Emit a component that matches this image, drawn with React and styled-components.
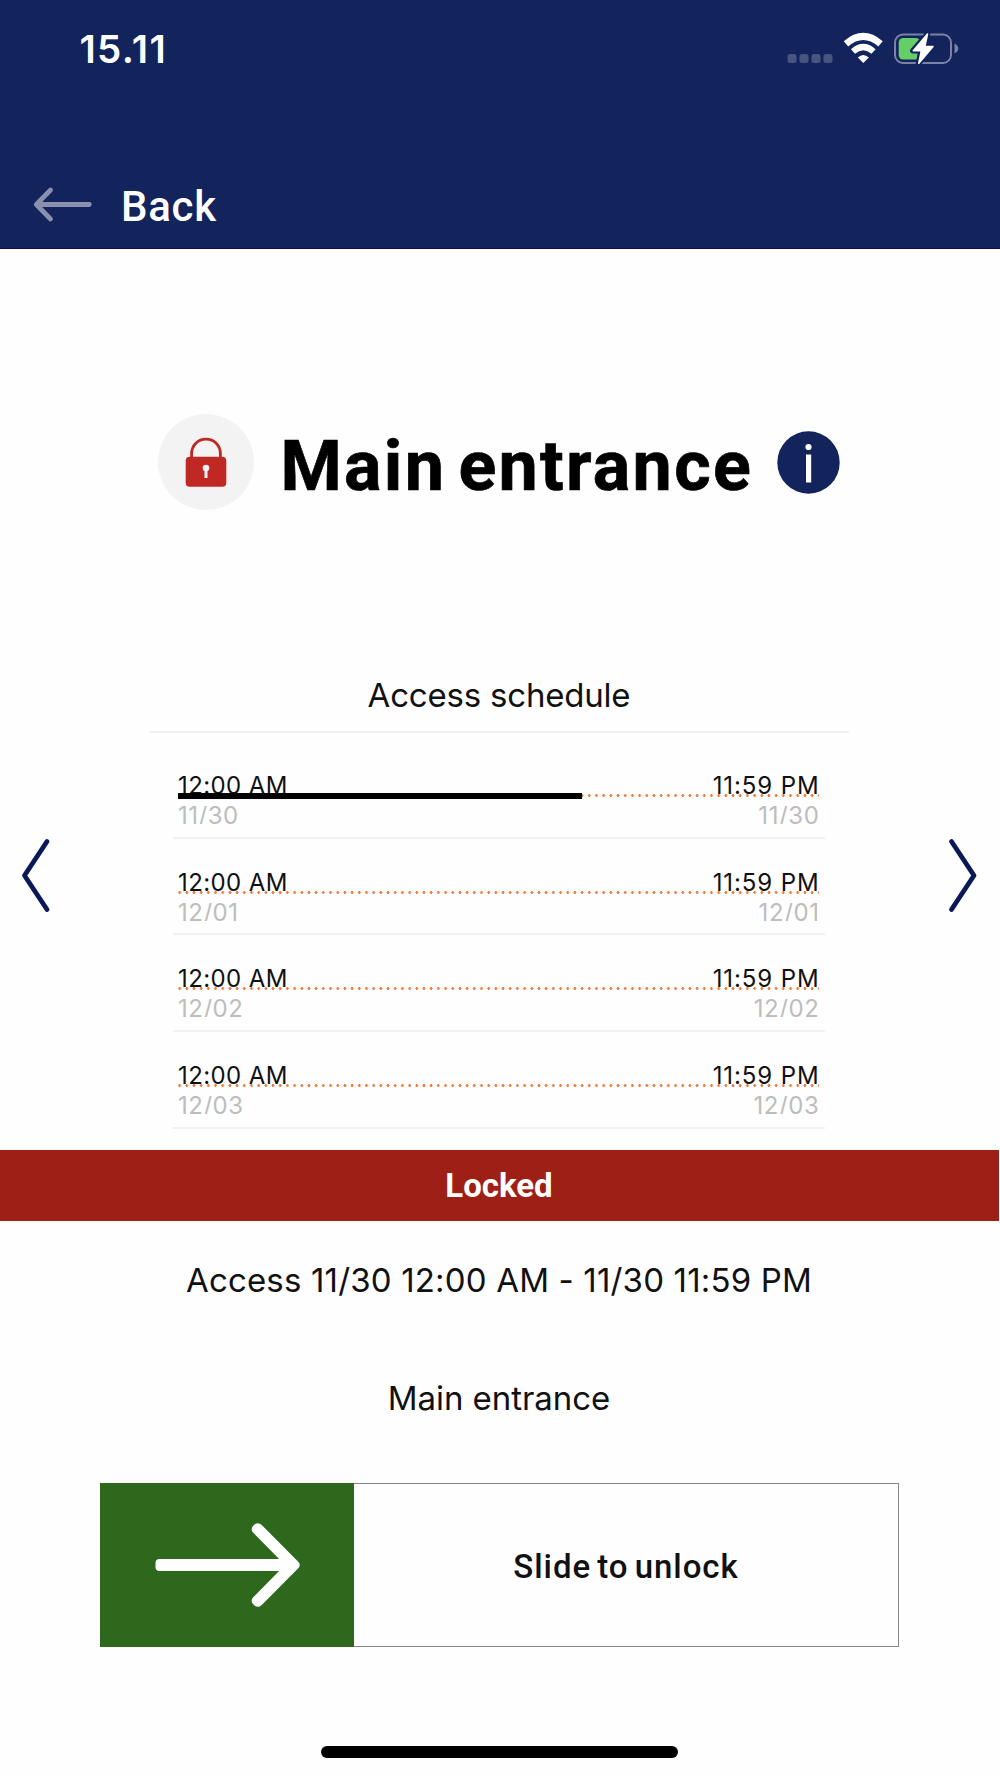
import React from "react";
import styled, { createGlobalStyle } from "styled-components";

const GlobalStyle = createGlobalStyle`
  * { box-sizing: border-box; }
  html, body { margin: 0; padding: 0; background: #fefefe; }
  svg { display: block; flex: none; }
`;

const interStack = `Inter, "Liberation Sans", sans-serif`;
const robotoStack = `Roboto, "Liberation Sans", sans-serif`;

const Screen = styled.main`
  width: 1000px;
  height: 1778px;
  display: flex;
  flex-direction: column;
  background: #fefefe;
  color: #111;
  font-family: ${interStack};
  overflow: hidden;
`;

const Header = styled.header`
  height: 249px;
  flex: none;
  display: flex;
  flex-direction: column;
  justify-content: space-between;
  background: #13235b;
  border-bottom: 1px solid #0b1150;
  color: #fff;
`;

const StatusBar = styled.div`
  height: 98px;
  display: flex;
  align-items: center;
  justify-content: space-between;
  padding: 0 41px 2px 79.5px;
`;

const Clock = styled.span`
  padding-top: 1px;
  font-size: 38.5px;
  font-weight: 600;
  line-height: 48px;
  letter-spacing: 1.3px;
`;

const BackButton = styled.button`
  height: 88px;
  display: flex;
  align-items: center;
  gap: 27px;
  padding: 0 0 0 32px;
  border: 0;
  background: none;
  color: #fff;
  font: 500 42px/50px ${robotoStack};
  letter-spacing: 0.7px;
`;

const BackLabel = styled.span`
  padding-top: 5px;
`;

const TitleRow = styled.section`
  height: 96px;
  flex: none;
  margin-top: 165px;
  padding-left: 157.5px;
  display: flex;
  align-items: center;
`;

const LockBadge = styled.div`
  width: 96px;
  height: 96px;
  flex: none;
  border-radius: 50%;
  background: #f3f3f3;
  display: grid;
  place-items: center;
`;

const Title = styled.h1`
  width: 496px;
  margin: 8px 0 0 27px;
  color: #000;
  font: 700 70px/84px ${robotoStack};
  letter-spacing: 2.3px;
  word-spacing: -7.5px;
  white-space: nowrap;
  -webkit-text-stroke: 0.7px #000;
`;

const Pager = styled.section`
  height: 479.5px;
  flex: none;
  margin-top: 160px;
  display: flex;
  justify-content: space-between;
`;

const PageButton = styled.button`
  width: 70px;
  height: 80px;
  margin-top: 165px;
  padding: 0;
  border: 0;
  background: none;
`;

const Schedule = styled.div`
  width: 700px;
  margin-right: 2px;
`;

const ScheduleTitle = styled.h2`
  height: 63px;
  margin: 0;
  padding-top: 4px;
  border-bottom: 2px solid #f1f1f2;
  font-size: 33px;
  font-weight: 400;
  line-height: 42px;
  letter-spacing: -0.2px;
  text-align: center;
`;

const DayList = styled.div`
  padding-top: 9px;
`;

const Day = styled.div`
  height: 96.7px;
  margin: 0 24px;
  padding: 32px 6px 0 5px;
  border-bottom: 2px solid #f1f1f2;
`;

const Line = styled.div`
  display: flex;
  justify-content: space-between;
  height: ${(p) => (p.$muted ? 20 : 21)}px;
  overflow: hidden;
  color: ${(p) => (p.$muted ? "#bdbdbd" : "#111")};
  font-size: 24px;
  line-height: 23.5px;
  letter-spacing: ${(p) => (p.$muted ? 0.5 : 0.4)}px;
`;

const EndLabel = styled.span`
  margin-right: -0.5px;
  letter-spacing: ${(p) => (p.$muted ? 0.6 : 0.9)}px;
`;

const Track = styled.div`
  height: 6px;
  margin: -2px 0 5px 0;
  display: flex;
  align-items: center;
  background: radial-gradient(circle, #f07d3a 1.1px, rgba(240, 125, 58, 0) 1.7px) -2px 0 / 7.19px 5px repeat-x;
`;

const Elapsed = styled.div`
  height: 6px;
  background: #000;
`;

const StatusBand = styled.div`
  width: 999px;
  height: 71.5px;
  flex: none;
  display: flex;
  align-items: center;
  justify-content: center;
  padding: 1px 1px 0 0;
  background: #9e1f15;
  color: #fff;
  font: 700 33px/40px ${robotoStack};
  letter-spacing: 0px;
`;

const Caption = styled.p`
  margin: ${(p) => p.$top}px 2px 0 0;
  font-size: 33px;
  line-height: 42px;
  letter-spacing: ${(p) => p.$spacing}px;
  text-align: center;
  white-space: nowrap;
`;

const Slider = styled.div`
  width: 799px;
  height: 164px;
  flex: none;
  margin: 64px 0 0 100px;
  display: flex;
  border: 1px solid #858585;
`;

const Handle = styled.div`
  width: 254px;
  margin: -1px 0 -1px -1px;
  flex: none;
  display: grid;
  place-items: center;
  background: #2d681c;
`;

const SliderLabel = styled.span`
  flex: 1;
  display: flex;
  align-items: center;
  justify-content: center;
  padding-top: 4px;
  font: 500 33px/40px ${robotoStack};
  letter-spacing: 0.95px;
  word-spacing: -3px;
`;

const HomeIndicator = styled.div`
  width: 357px;
  height: 12px;
  margin: 99px 0 0 321px;
  border-radius: 6px;
  background: #000;
`;

function StatusIcons() {
  return (
    <svg width="172" height="40" viewBox="787 28 172 40" fill="none">
      {[787.5, 799.5, 811.5, 823.5].map((x) => (
        <rect key={x} x={x} y="54" width="9" height="9" rx="2.5" fill="#47547f" />
      ))}
      <g stroke="#fff">
        <path d="M846 43.8 Q863.3 29 880.5 43.8" strokeWidth="6.8" />
        <path d="M853 51.5 Q863.3 42.5 873.5 51.5" strokeWidth="6.2" />
      </g>
      <path d="M857.8 57.5 Q863.3 52.5 868.8 57.5 L863.3 63 Z" fill="#fff" />
      <rect x="895" y="34.5" width="56" height="28.5" rx="8" stroke="#7a83a5" strokeWidth="2" />
      <path d="M954.5 43.5 C959.5 45.5 959.5 51.5 954.5 53.5 Z" fill="#7a83a5" />
      <rect x="898.7" y="38" width="21.5" height="21.5" rx="4.5" fill="#66ce67" />
      <g transform="translate(1 0)" strokeLinejoin="round">
        <path d="M926.5 34 L911.8 50.8 H920 L917.5 63.5 L932 46.5 H924 Z" fill="#13235b" stroke="#13235b" strokeWidth="5.5" />
        <path d="M926.5 34 L912.3 50.8 H920.3 L917.8 63.3 L932 46.5 H923.8 Z" fill="#fff" stroke="#fff" strokeWidth="1.6" />
      </g>
    </svg>
  );
}

function BackArrow() {
  return (
    <svg width="62" height="40" viewBox="0 0 62 40" fill="none" stroke="#8990b0" strokeWidth="4.8" strokeLinecap="round" strokeLinejoin="round">
      <path d="M57.3 20.5H5M18.5 6L4.3 20.5l14.2 14.5" />
    </svg>
  );
}

function Padlock() {
  return (
    <svg width="42" height="50" viewBox="0 0 42 50" fill="none">
      <path d="M6.6 22V17C6.6 8 13 2.2 21 2.2S35.4 8 35.4 17v5" stroke="#c02923" strokeWidth="2.8" />
      <rect x="0.7" y="19.8" width="40.6" height="30" rx="4" fill="#c02923" />
      <circle cx="21" cy="31" r="3.3" fill="#f3f3f3" />
      <path d="M19.5 31h3v10h-3z" fill="#f3f3f3" />
    </svg>
  );
}

function InfoIcon() {
  return (
    <svg width="63" height="63" viewBox="0 0 63 63">
      <circle cx="31.5" cy="31.5" r="31.2" fill="#13235b" />
      <circle cx="31.5" cy="16" r="3.1" fill="#fff" />
      <rect x="29" y="23.5" width="5.2" height="28" fill="#fff" />
    </svg>
  );
}

function Chevron({ points }) {
  return (
    <svg width="70" height="80" viewBox="0 0 70 80" fill="none" stroke="#0a1858" strokeWidth="4.8" strokeLinecap="round" strokeLinejoin="round">
      <polyline points={points} />
    </svg>
  );
}

function SlideArrow() {
  return (
    <svg width="146" height="84" viewBox="0 0 146 84">
      <rect x="1.5" y="36" width="132" height="12" rx="4" fill="#fff" />
      <path d="M100.5 1.5 Q104 -1.2 107.5 1.8 L144.5 39 Q147 42 144.5 45 L107.5 82.2 Q104 85.2 100.5 82.5 L99 81 Q96.3 77.5 99 74.5 L131 42 L99 9.5 Q96.3 6.5 99 3 Z" fill="#fff" />
    </svg>
  );
}

const days = [
  { date: "11/30", elapsed: 63.1 },
  { date: "12/01", elapsed: 0 },
  { date: "12/02", elapsed: 0 },
  { date: "12/03", elapsed: 0 },
];

export default function App() {
  return (
    <>
      <GlobalStyle />
      <Screen>
        <Header>
          <StatusBar>
            <Clock>15.11</Clock>
            <StatusIcons />
          </StatusBar>
          <BackButton>
            <BackArrow />
            <BackLabel>Back</BackLabel>
          </BackButton>
        </Header>
        <TitleRow>
          <LockBadge><Padlock /></LockBadge>
          <Title>Main entrance</Title>
          <InfoIcon />
        </TitleRow>
        <Pager>
          <PageButton aria-label="Previous"><Chevron points="47,6.5 24.5,40.5 47,74.5" /></PageButton>
          <Schedule>
            <ScheduleTitle>Access schedule</ScheduleTitle>
            <DayList>
              {days.map((day) => (
                <Day key={day.date}>
                  <Line><span>12:00 AM</span><EndLabel>11:59 PM</EndLabel></Line>
                  <Track><Elapsed style={{ width: `${day.elapsed}%` }} /></Track>
                  <Line $muted><span>{day.date}</span><EndLabel $muted>{day.date}</EndLabel></Line>
                </Day>
              ))}
            </DayList>
          </Schedule>
          <PageButton aria-label="Next"><Chevron points="21.5,6.5 44,40.5 21.5,74.5" /></PageButton>
        </Pager>
        <StatusBand>Locked</StatusBand>
        <Caption $top={38} $spacing={0.17}>Access 11/30 12:00 AM - 11/30 11:59 PM</Caption>
        <Caption $top={76} $spacing={-0.05}>Main entrance</Caption>
        <Slider>
          <Handle><SlideArrow /></Handle>
          <SliderLabel>Slide to unlock</SliderLabel>
        </Slider>
        <HomeIndicator />
      </Screen>
    </>
  );
}
